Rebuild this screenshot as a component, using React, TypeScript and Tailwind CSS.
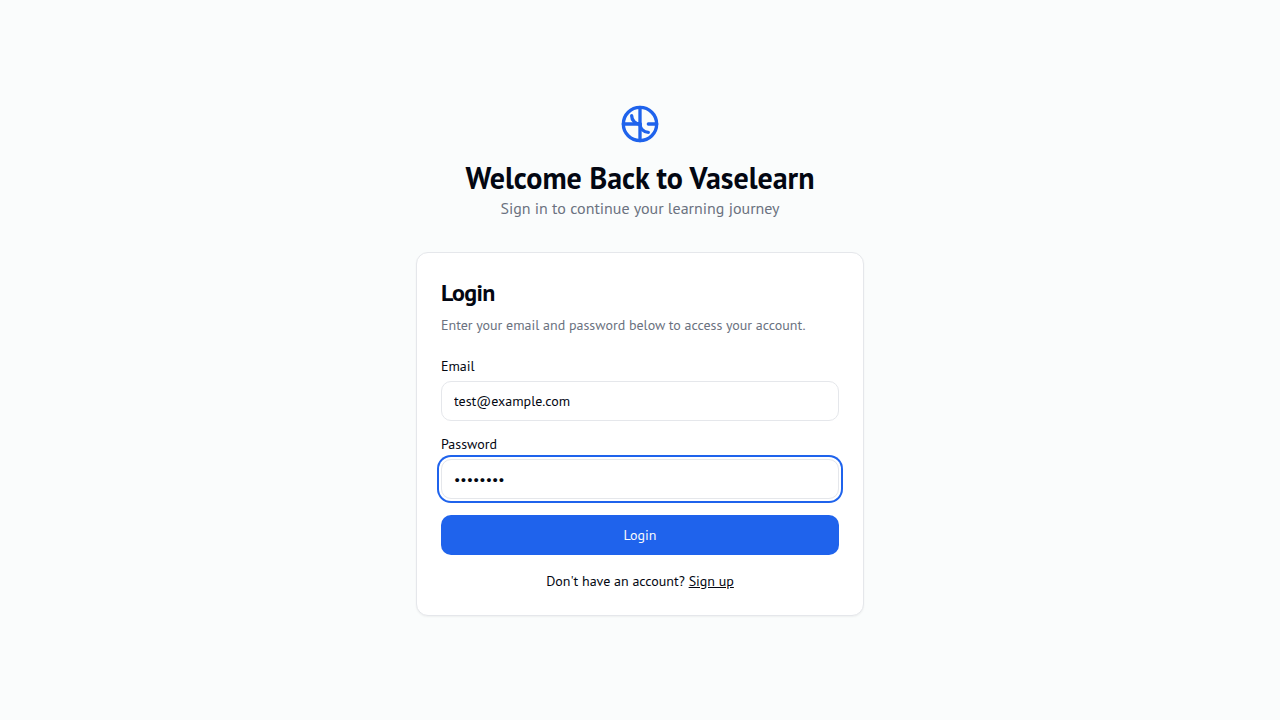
import { useState } from "react";

function LogoIcon() {
  return (
    <svg
      viewBox="0 0 24 24"
      fill="none"
      stroke="currentColor"
      strokeWidth="2"
      strokeLinecap="round"
      strokeLinejoin="round"
      className="size-10 text-[#1f63ec]"
      aria-hidden="true"
    >
      <circle cx="12" cy="12" r="10" />
      <path d="M12 2v20" />
      <path d="M2 12h10" />
      <path d="M22 12h-5" />
      <path d="M7 7c0 2.76 2.24 5 5 5" />
      <path d="M12 12c0 2.76 2.24 5 5 5" />
    </svg>
  );
}

const inputClass =
  "h-10 w-full rounded-[10px] border border-[#e5e7eb] bg-white px-3 py-2 text-sm outline-none";

export default function App() {
  const [email, setEmail] = useState("test@example.com");
  const [password, setPassword] = useState("password");

  return (
    <main className="flex min-h-screen flex-col items-center justify-center bg-[#fafcfc] p-4 font-['PT_Sans','Noto_Sans',sans-serif] text-[#030712]">
      <div className="w-full max-w-md">
        <header className="mb-8 flex flex-col items-center text-center">
          <LogoIcon />
          <h1 className="mt-4 text-3xl font-bold">Welcome Back to Vaselearn</h1>
          <p className="text-[#6b7280]">Sign in to continue your learning journey</p>
        </header>

        <section className="rounded-xl border border-[#e5e7eb] bg-white p-6 shadow-xs">
          <h2 className="text-2xl font-bold tracking-tight">Login</h2>
          <p className="mt-1.5 text-sm text-[#6b7280]">
            Enter your email and password below to access your account.
          </p>

          <form className="mt-6 grid gap-4" onSubmit={(e) => e.preventDefault()}>
            <div className="grid gap-2">
              <label htmlFor="email" className="text-sm leading-none">
                Email
              </label>
              <input
                id="email"
                type="email"
                value={email}
                onChange={(e) => setEmail(e.target.value)}
                className={inputClass}
              />
            </div>
            <div className="grid gap-2">
              <label htmlFor="password" className="text-sm leading-none">
                Password
              </label>
              <input
                id="password"
                type="password"
                value={password}
                onChange={(e) => setPassword(e.target.value)}
                className={`${inputClass} ring-2 ring-[#1f63ec] ring-offset-2 ring-offset-white`}
              />
            </div>
            <button
              type="submit"
              className="h-10 w-full rounded-[10px] bg-[#1f63ec] px-4 text-sm text-[#f9fafb]"
            >
              Login
            </button>
          </form>

          <p className="mt-4 text-center text-sm">
            Don't have an account?{" "}
            <a href="#signup" className="underline">
              Sign up
            </a>
          </p>
        </section>
      </div>
    </main>
  );
}
